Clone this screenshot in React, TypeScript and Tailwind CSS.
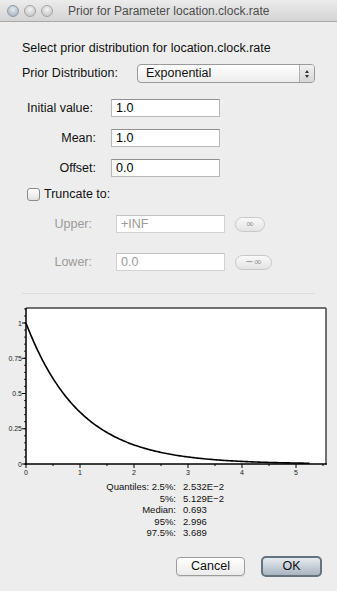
import React from "react";

const font = { fontFamily: '"Liberation Sans", Arial, sans-serif' };

function Light({ first }: { first?: boolean }) {
  return (
    <div
      className={
        "w-[12px] h-[12px] rounded-full border " +
        (first
          ? "border-[#8e99a6] bg-[radial-gradient(circle_at_50%_35%,#e6ebf0_0%,#b7c1cc_60%,#a2adb9_100%)]"
          : "border-[#a4a4a4] bg-[radial-gradient(circle_at_50%_35%,#f4f4f4_0%,#d2d2d2_60%,#bdbdbd_100%)]")
      }
    />
  );
}

function Field({ value, disabled }: { value: string; disabled?: boolean }) {
  return (
    <div
      className={
        "w-[109px] h-[18px] bg-white border flex items-center pl-[4px] text-[12.5px] " +
        (disabled
          ? "text-[#9a9a9a] border-[#d2d2d2] border-t-[#c2c2c2]"
          : "text-black border-[#b8b8b8] border-t-[#909090]")
      }
    >
      {value}
    </div>
  );
}

function Chart() {
  const left = 26;
  const top = 8;
  const right = 326;
  const bottom = 164;
  const sx = 54;
  const sy = 141;
  const pts: string[] = [];
  for (let i = 0; i <= 210; i++) {
    const x = (5.25 * i) / 210;
    const px = left + sx * x;
    const py = bottom - sy * Math.exp(-x);
    pts.push(`${px.toFixed(2)},${py.toFixed(2)}`);
  }
  const yMinor: number[] = [];
  for (let i = 0; i <= 22; i++) yMinor.push(bottom - (sy * i) / 20);
  const yMajor = [
    { v: 1, l: "1" },
    { v: 0.75, l: "0.75" },
    { v: 0.5, l: "0.5" },
    { v: 0.25, l: "0.25" },
    { v: 0, l: "0" },
  ];
  return (
    <svg width="337" height="180" className="block">
      <rect x={left} y={top} width={right - left} height={bottom - top} fill="#ffffff" />
      <line x1={left} y1={top} x2={right} y2={top} stroke="#444" strokeWidth="1.5" />
      <line x1={right} y1={top} x2={right} y2={bottom} stroke="#444" strokeWidth="1.5" />
      <line x1={left} y1={top} x2={left} y2={bottom + 1} stroke="#000" strokeWidth="1.5" />
      <line x1={left - 1} y1={bottom} x2={right + 1} y2={bottom} stroke="#000" strokeWidth="1.5" />
      {yMinor.map((y, i) => (
        <line key={i} x1={left - 2} y1={y} x2={left} y2={y} stroke="#000" strokeWidth="0.8" />
      ))}
      {yMajor.map((m) => (
        <g key={m.l}>
          <line x1={left - 4} y1={bottom - sy * m.v} x2={left} y2={bottom - sy * m.v} stroke="#000" strokeWidth="1" />
          <text
            x={left - 4}
            y={bottom - sy * m.v + 2.5}
            textAnchor="end"
            fontSize="7"
            fill="#222"
            style={{ fontFamily: '"Liberation Sans", sans-serif' }}
          >
            {m.l}
          </text>
        </g>
      ))}
      {[0, 0.5, 1, 1.5, 2, 2.5, 3, 3.5, 4, 4.5, 5, 5.5].map((v) => (
        <line
          key={v}
          x1={left + sx * v}
          y1={bottom}
          x2={left + sx * v}
          y2={bottom + (Number.isInteger(v) ? 4 : 2)}
          stroke="#000"
          strokeWidth="1"
        />
      ))}
      {[0, 1, 2, 3, 4, 5].map((v) => (
        <text
          key={v}
          x={left + sx * v}
          y={bottom + 11}
          textAnchor="middle"
          fontSize="7"
          fill="#222"
          style={{ fontFamily: '"Liberation Sans", sans-serif' }}
        >
          {v}
        </text>
      ))}
      <polyline points={pts.join(" ")} fill="none" stroke="#000" strokeWidth="1.6" />
    </svg>
  );
}

export default function App() {
  return (
    <div className="w-[337px] h-[591px] bg-[#ededed] flex flex-col overflow-hidden text-[#111]" style={font}>
      {/* Title bar */}
      <div className="h-[22px] shrink-0 bg-gradient-to-b from-[#ececec] to-[#d4d4d4] border-b border-[#a8a8a8] flex items-center">
        <div className="flex items-center gap-[5px] pl-[7px]">
          <Light first />
          <Light />
          <Light />
        </div>
        <div className="ml-[15px] text-[12px] text-[#4d4d4d]">Prior for Parameter location.clock.rate</div>
      </div>

      {/* Content */}
      <div className="flex flex-col">
        <div className="mt-[19px] ml-[22px] text-[12.5px] leading-[15px]">Select prior distribution for location.clock.rate</div>

        <div className="mt-[8px] flex items-center h-[19px]">
          <div className="ml-[22px] w-[115px] text-[12.5px]">Prior Distribution:</div>
          <div className="w-[178px] h-[19px] rounded-[4px] border border-[#9a9a9a] bg-gradient-to-b from-[#ffffff] to-[#ececec] flex items-stretch overflow-hidden">
            <div className="flex-1 flex items-center pl-[8px] text-[12.5px]">Exponential</div>
            <div className="w-[15px] border-l border-[#b0b0b0] bg-gradient-to-b from-[#f2f2f2] to-[#d6d6d6] flex flex-col items-center justify-center gap-[2px]">
              <div className="w-0 h-0 border-l-[2.5px] border-r-[2.5px] border-b-[3px] border-l-transparent border-r-transparent border-b-[#333]" />
              <div className="w-0 h-0 border-l-[2.5px] border-r-[2.5px] border-t-[3px] border-l-transparent border-r-transparent border-t-[#333]" />
            </div>
          </div>
        </div>

        <div className="mt-[16px] flex items-center">
          <div className="w-[96px] text-right text-[12.5px] pr-[3px]">Initial value:</div>
          <div className="ml-[15px]"><Field value="1.0" /></div>
        </div>
        <div className="mt-[11px] flex items-center">
          <div className="w-[96px] text-right text-[12.5px]">Mean:</div>
          <div className="ml-[15px]"><Field value="1.0" /></div>
        </div>
        <div className="mt-[11px] flex items-center">
          <div className="w-[96px] text-right text-[12.5px]">Offset:</div>
          <div className="ml-[15px]"><Field value="0.0" /></div>
        </div>

        <div className="mt-[10px] flex items-center ml-[27px] h-[14px]">
          <div className="w-[13px] h-[13px] rounded-[3px] border border-[#8c8c8c] bg-gradient-to-b from-[#ffffff] to-[#e2e2e2]" />
          <div className="ml-[4px] text-[12.5px]">Truncate to:</div>
        </div>

        <div className="mt-[14px] flex items-center h-[18px]">
          <div className="w-[92px] text-right text-[12.5px] text-[#9a9a9a]">Upper:</div>
          <div className="ml-[24px]"><Field value="+INF" disabled /></div>
          <div className="ml-[10px] w-[30px] h-[15px] rounded-full border border-[#c8c8c8] bg-gradient-to-b from-[#f9f9f9] to-[#e4e4e4] flex items-center justify-center text-[10px] text-[#8f8f8f] leading-none" style={{ fontFamily: '"DejaVu Sans", sans-serif' }}>∞</div>
        </div>
        <div className="mt-[20px] flex items-center h-[18px]">
          <div className="w-[92px] text-right text-[12.5px] text-[#9a9a9a]">Lower:</div>
          <div className="ml-[24px]"><Field value="0.0" disabled /></div>
          <div className="ml-[10px] w-[37px] h-[15px] rounded-full border border-[#c8c8c8] bg-gradient-to-b from-[#f9f9f9] to-[#e4e4e4] flex items-center justify-center text-[10px] text-[#8f8f8f] leading-none" style={{ fontFamily: '"DejaVu Sans", sans-serif' }}>−∞</div>
        </div>

        <div className="mt-[22px] mx-[22px] h-[1px] bg-[#dcdcdc]" />

        <div className="mt-[6px]">
          <Chart />
        </div>

        <div className="mt-[1px] flex text-[9.5px] leading-[11.5px]">
          <div className="w-[176px] text-right flex flex-col">
            <span>Quantiles: 2.5%:</span>
            <span>5%:</span>
            <span>Median:</span>
            <span>95%:</span>
            <span>97.5%:</span>
          </div>
          <div className="ml-[7px] flex flex-col">
            <span>2.532E−2</span>
            <span>5.129E−2</span>
            <span>0.693</span>
            <span>2.996</span>
            <span>3.689</span>
          </div>
        </div>

        <div className="mt-[17px] flex items-center">
          <div className="ml-[176px] w-[69px] h-[19px] rounded-[4px] border border-[#9c9c9c] bg-gradient-to-b from-[#ffffff] to-[#ebebeb] flex items-center justify-center text-[12.5px] shadow-[0_1px_0_rgba(0,0,0,0.08)]">Cancel</div>
          <div className="ml-[16px] w-[61px] h-[21px] rounded-[5px] border-[2px] border-[#66727e] bg-gradient-to-b from-[#e6ebf0] to-[#aab5c1] flex items-center justify-center text-[12.5px]">OK</div>
        </div>
      </div>
    </div>
  );
}
